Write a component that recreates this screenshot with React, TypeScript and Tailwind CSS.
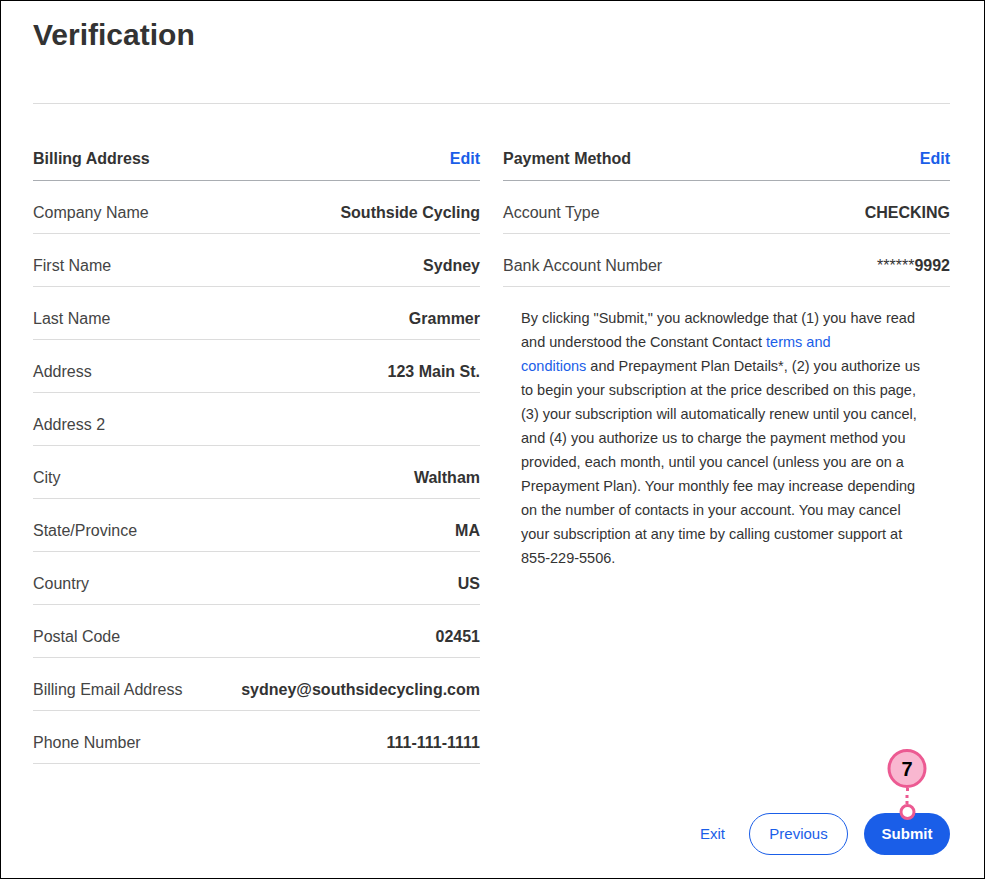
const billing: [string, string][] = [
  ["Company Name", "Southside Cycling"],
  ["First Name", "Sydney"],
  ["Last Name", "Grammer"],
  ["Address", "123 Main St."],
  ["Address 2", ""],
  ["City", "Waltham"],
  ["State/Province", "MA"],
  ["Country", "US"],
  ["Postal Code", "02451"],
  ["Billing Email Address", "sydney@southsidecycling.com"],
  ["Phone Number", "111-111-1111"],
];

function Row({ label, value }: { label: string; value: React.ReactNode }) {
  return (
    <div className="flex h-[53px] items-center justify-between border-b border-[#dcdcdc] pt-[11px]">
      <span className="text-[16px] text-[#444]">{label}</span>
      <span className="text-[16px] font-bold text-[#333]">{value}</span>
    </div>
  );
}

function Header({ title }: { title: string }) {
  return (
    <div className="flex h-[54px] items-center justify-between border-b border-[#a9adb2] pt-[10px]">
      <span className="text-[16px] font-bold text-[#333]">{title}</span>
      <a className="text-[16px] font-bold text-[#1a5ee8]">Edit</a>
    </div>
  );
}

export default function App() {
  return (
    <div
      className="relative h-[879px] w-[985px] border border-black bg-white"
      style={{ fontFamily: '"Liberation Sans", Arial, sans-serif' }}
    >
      <div className="pl-[32px] pr-[34px]">
        <h1 className="pt-[14px] text-[30px] font-bold leading-[40px] text-[#333]">Verification</h1>
        <div className="mt-[48px] border-t border-[#dcdcdc]" />
        <div className="mt-[23px] grid grid-cols-2 gap-[23px]">
          <div>
            <Header title="Billing Address" />
            {billing.map(([l, v]) => (
              <Row key={l} label={l} value={v} />
            ))}
          </div>
          <div>
            <Header title="Payment Method" />
            <Row label="Account Type" value="CHECKING" />
            <Row
              label="Bank Account Number"
              value={
                <>
                  <span className="font-normal">******</span>9992
                </>
              }
            />
            <p className="mt-[19px] whitespace-nowrap pl-[18px] text-[14.5px] leading-[24px] text-[#333]">
              By clicking "Submit," you acknowledge that (1) you have read
              <br />
              and understood the Constant Contact <a className="text-[#1a5ee8]">terms and</a>
              <br />
              <a className="text-[#1a5ee8]">conditions</a> and Prepayment Plan Details*, (2) you authorize us
              <br />
              to begin your subscription at the price described on this page,
              <br />
              (3) your subscription will automatically renew until you cancel,
              <br />
              and (4) you authorize us to charge the payment method you
              <br />
              provided, each month, until you cancel (unless you are on a
              <br />
              Prepayment Plan). Your monthly fee may increase depending
              <br />
              on the number of contacts in your account. You may cancel
              <br />
              your subscription at any time by calling customer support at
              <br />
              855-229-5506.
            </p>
          </div>
        </div>
        <div className="mt-[49px] flex items-center justify-end gap-[16px]">
          <a className="mr-[8px] text-[15px] text-[#1a5ee8]">Exit</a>
          <button className="h-[42px] w-[99px] rounded-full border border-[#1a5ee8] text-[15px] text-[#1a5ee8]">
            Previous
          </button>
          <div className="relative">
            <button className="h-[42px] w-[86px] rounded-full bg-[#1a5ee8] text-[15px] font-bold text-white">
              Submit
            </button>
            <div className="absolute left-1/2 top-[-64px] flex -translate-x-1/2 flex-col items-center">
              <div className="flex h-[39px] w-[39px] items-center justify-center rounded-full border-[3px] border-[#ec5a92] bg-[#f9b7d0] text-[20px] font-bold text-black">
                7
              </div>
              <div className="h-[16px] border-l-[3px] border-dotted border-[#ec5a92]" />
              <div className="h-[16px] w-[16px] rounded-full border-[3px] border-[#ec5a92] bg-white" />
            </div>
          </div>
        </div>
      </div>
    </div>
  );
}
